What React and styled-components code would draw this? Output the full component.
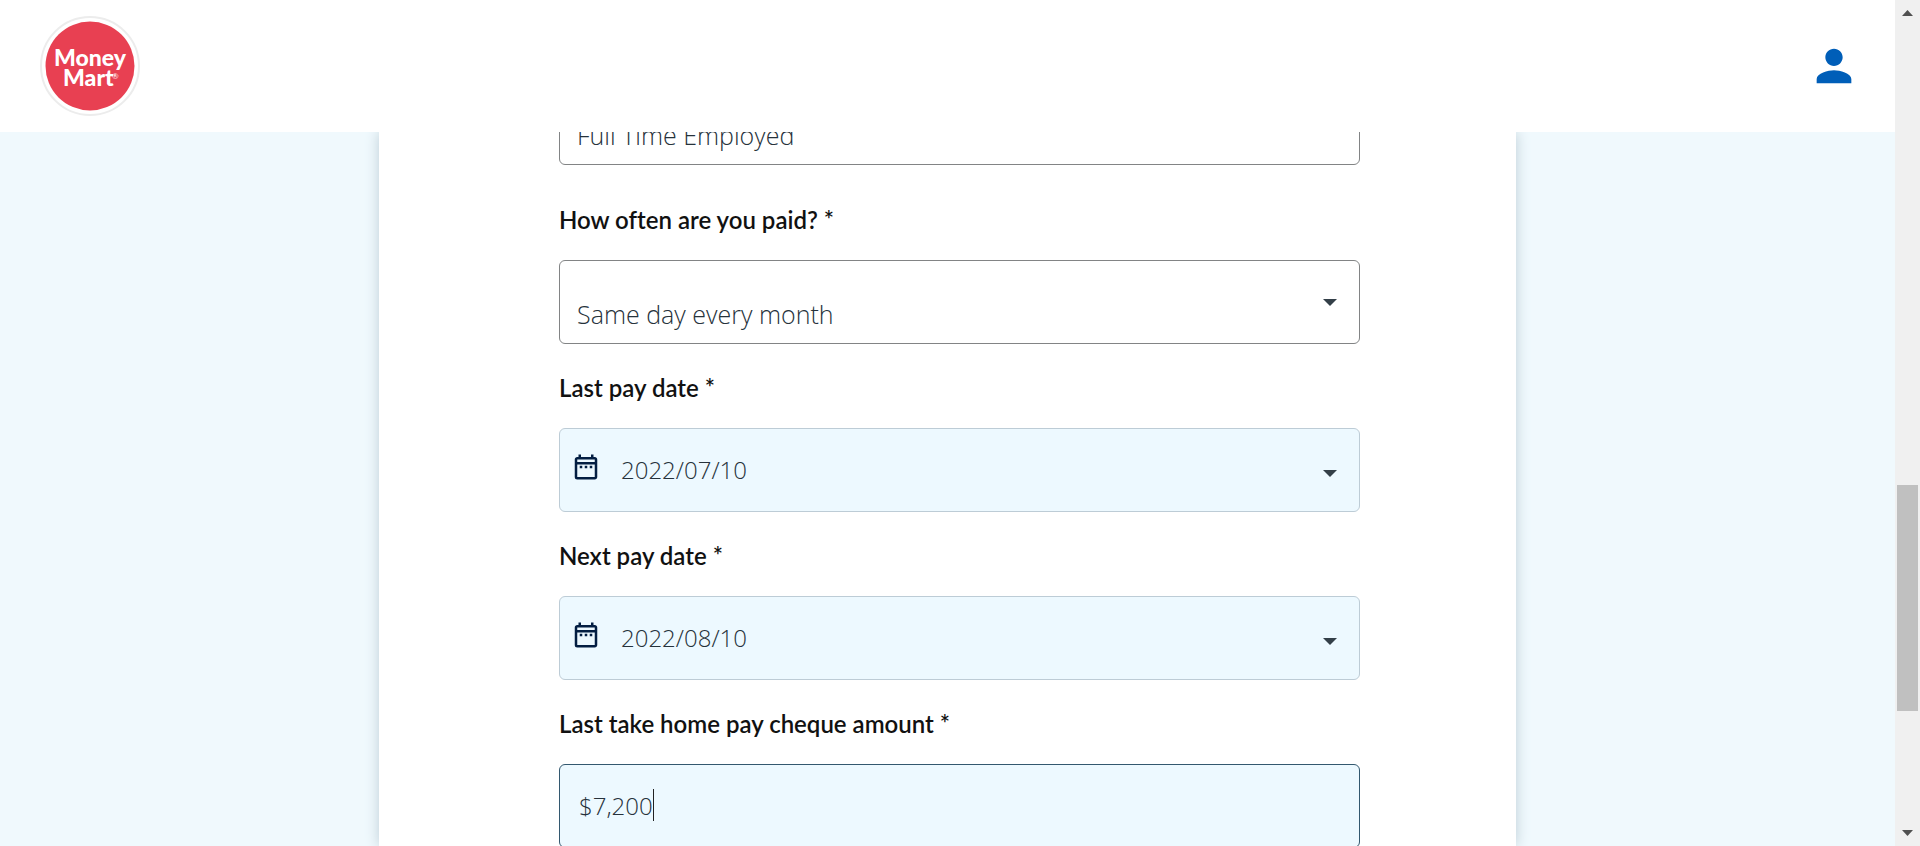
import React from "react";
import styled, { createGlobalStyle } from "styled-components";
import { MdPerson, MdOutlineDateRange } from "react-icons/md";

const GlobalStyle = createGlobalStyle`
  *, *::before, *::after { box-sizing: border-box; }
  body { margin: 0; background: #fff; }
`;

const Shell = styled.div`
  display: grid;
  grid-template-columns: minmax(0, 1fr) 25px;
  height: 100vh;
  overflow: hidden;
  font-family: "Open Sans", "Noto Sans", sans-serif;
`;

const Page = styled.div`
  display: flex;
  flex-direction: column;
  min-height: 0;
`;

const Header = styled.header`
  display: flex;
  flex: none;
  align-items: center;
  justify-content: space-between;
  height: 132px;
  padding: 0 35px 0 40px;
  background: #fff;
`;

const LogoLink = styled.a`
  display: block;
  height: 102px;
`;

const LogoText = styled.text`
  fill: #fff;
  font-family: Lato, sans-serif;
  font-size: 23px;
  font-weight: 900;
`;

const LogoMark = styled.tspan`
  font-size: 8px;
  font-weight: 400;
`;

const AccountButton = styled.button`
  display: flex;
  padding: 0;
  border: 0;
  background: none;
  color: #005eb8;
  font-size: 52px;
`;

const Main = styled.main`
  display: flex;
  flex: 1;
  justify-content: center;
  min-height: 0;
  overflow: hidden;
  background: #f0f9fd;
`;

const Card = styled.div`
  width: 60%;
  background: #fff;
  box-shadow: 0 0 13px 0 #bccdd6;
`;

const Form = styled.form`
  display: flex;
  flex-direction: column;
  gap: 29px;
  width: 801px;
  max-width: 100%;
  margin: -51px 0 0 180px;
`;

const Field = styled.div`
  display: flex;
  flex-direction: column;
  gap: 25px;
  padding-top: ${(p) => (p.$spaced ? 11 : 0)}px;
`;

const Label = styled.label`
  color: #111;
  font-family: Lato, sans-serif;
  font-size: 24px;
  font-weight: 600;
  font-variant-ligatures: none;
  line-height: 30px;
`;

const tones = {
  plain: { border: "#828485", fill: "#fff" },
  filled: { border: "#bdccd6", fill: "#edf9ff" },
  focused: { border: "#33586f", fill: "#edf9ff" },
};

const Control = styled.div`
  display: grid;
  grid-template-columns: minmax(0, 1fr);
  align-items: center;
  height: 84px;
  border: 1px solid ${(p) => tones[p.$tone].border};
  border-radius: 6px;
  background: ${(p) => tones[p.$tone].fill};

  > * { grid-area: 1 / 1; }
`;

const Select = styled.select`
  width: 100%;
  height: 82px;
  padding: 23px 60px 0 17px;
  border: 0;
  outline: 0;
  appearance: none;
  background: none;
  color: #26323b;
  font-family: inherit;
  font-size: 25px;
  font-weight: 300;
`;

const TextInput = styled.input`
  width: 100%;
  height: 82px;
  padding: 0 60px 2px 61px;
  border: 0;
  outline: 0;
  background: none;
  color: #26323b;
  font-family: inherit;
  font-size: 24px;
  font-weight: 300;
`;

const AmountRow = styled.div`
  display: flex;
  align-items: center;
  padding-left: 19px;
`;

const AmountInput = styled(TextInput)`
  width: auto;
  padding: 0 0 2px;
  field-sizing: content;
  caret-color: transparent;
`;

const Caret = styled.span`
  width: 1px;
  height: 32px;
  margin-bottom: 2px;
  background: #222;
`;

const CalendarIcon = styled(MdOutlineDateRange)`
  justify-self: start;
  margin: 0 0 6px 11px;
  color: #031e42;
  font-size: 30px;
  pointer-events: none;
`;

const ArrowIcon = styled.svg`
  justify-self: end;
  width: 14px;
  height: 7px;
  margin: ${(p) => (p.$low ? 6 : 0)}px 22px 0 0;
  fill: #333f48;
  pointer-events: none;
`;

const ScrollTrack = styled.div`
  display: flex;
  flex-direction: column;
  align-items: center;
  padding: 10px 0;
  background: #f0f0f0;
`;

const ScrollArrow = styled.svg`
  flex: none;
  width: 11px;
  height: 6px;
  fill: #505050;
`;

const ScrollRoom = styled.div`
  flex: ${(p) => p.$share} 1 0;
`;

const ScrollThumb = styled.div`
  flex: 226 1 0;
  width: 21px;
  background: #c0c0c0;
`;

function Logo() {
  return (
    <LogoLink href="#" aria-label="Money Mart home">
      <svg width="102" height="102" viewBox="0 0 102 102">
        <circle cx="50" cy="51" r="49" fill="#fff" stroke="#ececec" strokeWidth="2" />
        <circle cx="50" cy="51" r="44.5" fill="#e84052" />
        <LogoText>
          <tspan x="14" y="51">Money</tspan>
          <tspan x="23" y="71">Mart</tspan>
          <LogoMark x="72" y="64">®</LogoMark>
        </LogoText>
      </svg>
    </LogoLink>
  );
}

function Arrow({ low }) {
  return (
    <ArrowIcon viewBox="0 0 14 7" $low={low} aria-hidden="true">
      <path d="M0 0h14L7 7z" />
    </ArrowIcon>
  );
}

function SelectControl({ value, ...rest }) {
  return (
    <Control $tone="plain">
      <Select defaultValue={value} {...rest}>
        <option>{value}</option>
      </Select>
      <Arrow />
    </Control>
  );
}

function DateField({ id, label, value }) {
  return (
    <Field>
      <Label htmlFor={id}>{label}</Label>
      <Control $tone="filled">
        <TextInput id={id} type="text" defaultValue={value} />
        <CalendarIcon aria-hidden="true" />
        <Arrow low />
      </Control>
    </Field>
  );
}

export default function App() {
  return (
    <Shell>
      <GlobalStyle />
      <Page>
        <Header>
          <Logo />
          <AccountButton type="button" aria-label="Account">
            <MdPerson />
          </AccountButton>
        </Header>
        <Main>
          <Card>
            <Form>
              <SelectControl aria-label="Employment" value="Full Time Employed" />
              <Field $spaced>
                <Label htmlFor="frequency">How often are you paid? *</Label>
                <SelectControl id="frequency" value="Same day every month" />
              </Field>
              <DateField id="last-pay" label="Last pay date *" value="2022/07/10" />
              <DateField id="next-pay" label="Next pay date *" value="2022/08/10" />
              <Field>
                <Label htmlFor="amount">Last take home pay cheque amount *</Label>
                <Control $tone="focused">
                  <AmountRow>
                    <AmountInput id="amount" type="text" defaultValue="$7,200" />
                    <Caret />
                  </AmountRow>
                </Control>
              </Field>
            </Form>
          </Card>
        </Main>
      </Page>
      <ScrollTrack aria-hidden="true">
        <ScrollArrow viewBox="0 0 11 6"><path d="M5.5 0L11 6H0z" /></ScrollArrow>
        <ScrollRoom $share={469} />
        <ScrollThumb />
        <ScrollRoom $share={119} />
        <ScrollArrow viewBox="0 0 11 6"><path d="M0 0h11L5.5 6z" /></ScrollArrow>
      </ScrollTrack>
    </Shell>
  );
}
